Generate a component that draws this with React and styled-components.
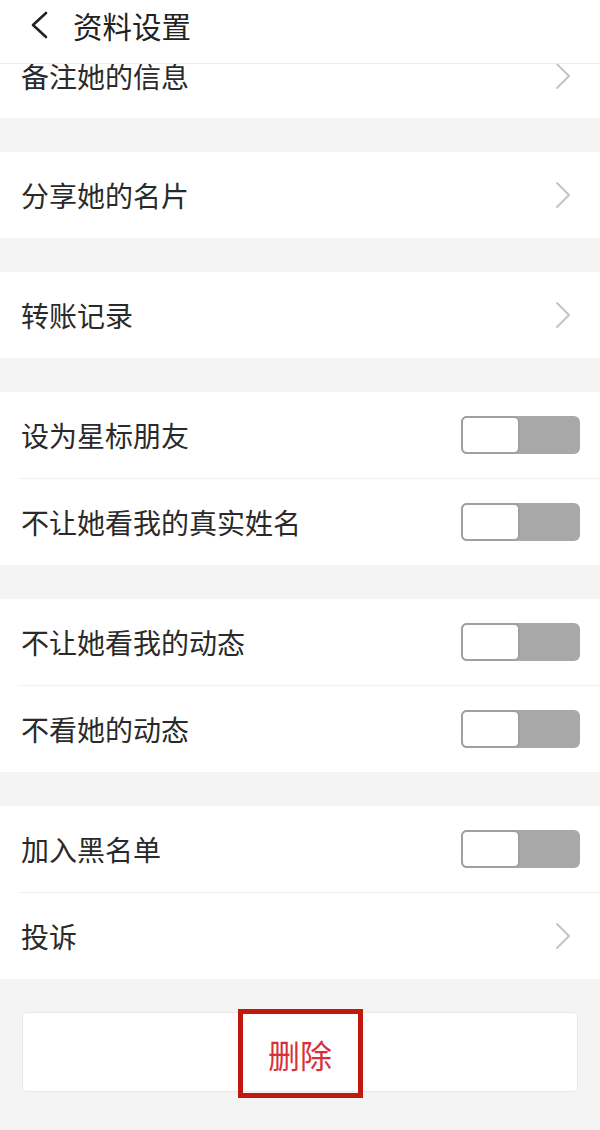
import styled, { createGlobalStyle } from "styled-components";

const GlobalStyle = createGlobalStyle`
  html, body {
    margin: 0;
    padding: 0;
    background: #f4f4f4;
  }
  body {
    font-family: "Noto Sans CJK SC", "Noto Sans", sans-serif;
    color: #2a2a2a;
  }
`;

const Page = styled.div`
  width: 600px;
  height: 1130px;
  display: flex;
  flex-direction: column;
  background: #f4f4f4;
  overflow: hidden;
`;

const Header = styled.header`
  position: relative;
  z-index: 1;
  height: 64px;
  box-sizing: border-box;
  flex-shrink: 0;
  display: flex;
  align-items: flex-start;
  gap: 24px;
  padding: 11px 0 0 29px;
  background: #fff;
  border-bottom: 1px solid #eeeeee;
`;

const BackButton = styled.button`
  display: flex;
  align-items: center;
  padding: 0;
  border: none;
  background: none;
  cursor: pointer;
`;

const Title = styled.h1`
  margin: 0;
  font-size: 29.5px;
  font-weight: 400;
  line-height: 29px;
  color: #222;
`;

const Body = styled.div`
  flex: 1;
  overflow: hidden;
`;

const Scroll = styled.div`
  display: flex;
  flex-direction: column;
  gap: 34px;
  margin-top: -30px;
`;

const Group = styled.section`
  background: #fff;
  display: flex;
  flex-direction: column;
`;

const Row = styled.div`
  height: ${(p) => (p.$first ? "84px" : "86px")};
  display: flex;
  align-items: center;
  justify-content: space-between;
  padding: 0 ${(p) => (p.$toggle ? "20px" : "29px")} 0 21px;
  cursor: pointer;
`;

const Label = styled.span`
  font-size: 28px;
  line-height: 1;
  color: #2a2a2a;
`;

const Divider = styled.div`
  height: 1px;
  margin-left: 18px;
  background: #f1f1f1;
`;

const Track = styled.div`
  width: 119px;
  height: 38px;
  box-sizing: border-box;
  border-radius: 6px;
  background: ${(p) => (p.$on ? "#4cd964" : "#a8a8a8")};
  display: flex;
  justify-content: ${(p) => (p.$on ? "flex-end" : "flex-start")};
`;

const Knob = styled.div`
  width: 59px;
  height: 38px;
  box-sizing: border-box;
  border: 2px solid #a0a0a0;
  border-radius: 6px;
  background: #fff;
`;

const Footer = styled.div`
  padding: 33px 22px;
`;

const DeleteButton = styled.button`
  width: 100%;
  height: 80px;
  display: flex;
  align-items: center;
  justify-content: center;
  background: #fff;
  border: 1px solid #e8e8e8;
  border-radius: 4px;
  cursor: pointer;
  font-family: inherit;
`;

const Highlight = styled.span`
  width: 125px;
  height: 89px;
  box-sizing: border-box;
  border: 5px solid #c2190f;
  display: flex;
  align-items: center;
  justify-content: center;
  margin-top: 3px;
  font-size: 32px;
  line-height: 1;
  color: #d8303b;
`;

const Chevron = () => (
  <svg width="16" height="28" viewBox="0 0 16 28" fill="none">
    <path d="M2 2 L14 14 L2 26" stroke="#c4c4c4" strokeWidth="2" strokeLinecap="round" strokeLinejoin="round" />
  </svg>
);

const BackIcon = () => (
  <svg width="20" height="28" viewBox="0 0 20 28" fill="none">
    <path d="M17 2 L4 14 L17 26" stroke="#222" strokeWidth="2.6" strokeLinecap="round" strokeLinejoin="round" />
  </svg>
);

const Toggle = ({ on }) => (
  <Track $on={on}>
    <Knob />
  </Track>
);

const groups = [
  [{ label: "备注她的信息" }],
  [{ label: "分享她的名片" }],
  [{ label: "转账记录" }],
  [
    { label: "设为星标朋友", toggle: true },
    { label: "不让她看我的真实姓名", toggle: true },
  ],
  [
    { label: "不让她看我的动态", toggle: true },
    { label: "不看她的动态", toggle: true },
  ],
  [
    { label: "加入黑名单", toggle: true },
    { label: "投诉" },
  ],
];

export default function App() {
  return (
    <>
      <GlobalStyle />
      <Page>
        <Header>
          <BackButton aria-label="返回">
            <BackIcon />
          </BackButton>
          <Title>资料设置</Title>
        </Header>
        <Body>
          <Scroll>
            {groups.map((items, gi) => (
              <Group key={gi}>
                {items.map((item, i) => (
                  <div key={item.label}>
                    {i > 0 && <Divider />}
                    <Row $toggle={item.toggle} $first={gi === 0}>
                      <Label>{item.label}</Label>
                      {item.toggle ? <Toggle on={false} /> : <Chevron />}
                    </Row>
                  </div>
                ))}
              </Group>
            ))}
          </Scroll>
          <Footer>
            <DeleteButton>
              <Highlight>删除</Highlight>
            </DeleteButton>
          </Footer>
        </Body>
      </Page>
    </>
  );
}
